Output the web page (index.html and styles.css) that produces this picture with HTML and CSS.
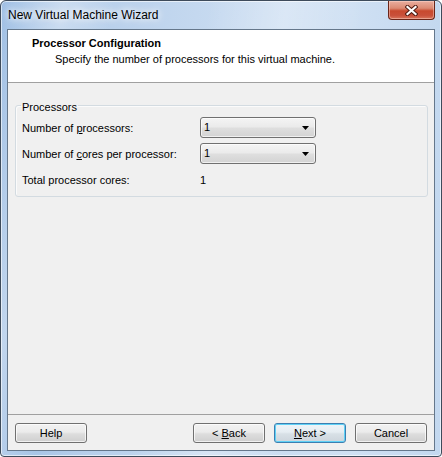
FILE: index.html
```html
<!DOCTYPE html>
<html>
<head>
<meta charset="utf-8">
<link rel="stylesheet" href="styles.css">
</head>
<body>
<div class="window">
  <div class="titlebar">
    <span class="title">New Virtual Machine Wizard</span>
    <div class="close">
      <svg width="13" height="11" viewBox="0 0 13 11"><path d="M2.5 2 L10.5 9 M10.5 2 L2.5 9" stroke="#4f1a10" stroke-width="4.2" stroke-linecap="square"/><path d="M2.5 2 L10.5 9 M10.5 2 L2.5 9" stroke="#fff" stroke-width="2.2" stroke-linecap="square"/></svg>
    </div>
  </div>
  <div class="client">
    <div class="header">
      <div class="h-title">Processor Configuration</div>
      <div class="h-sub">Specify the number of processors for this virtual machine.</div>
    </div>
    <div class="body">
      <fieldset class="group">
        <legend>Processors</legend>
        <div class="grid">
          <span>Number of <u>p</u>rocessors:</span>
          <div class="combo"><span>1</span><svg class="arrow" width="7" height="4" viewBox="0 0 7 4"><path d="M0 0H7L3.5 4Z" fill="#000"/></svg></div>
          <span>Number of <u>c</u>ores per processor:</span>
          <div class="combo"><span>1</span><svg class="arrow" width="7" height="4" viewBox="0 0 7 4"><path d="M0 0H7L3.5 4Z" fill="#000"/></svg></div>
          <span>Total processor cores:</span>
          <span class="val">1</span>
        </div>
      </fieldset>
    </div>
    <div class="footer">
      <div class="btn help">Help</div>
      <div class="btn">&lt; <u>B</u>ack</div>
      <div class="btn default"><u>N</u>ext &gt;</div>
      <div class="btn">Cancel</div>
    </div>
  </div>
</div>
</body>
</html>
```
FILE: styles.css
```css
* { box-sizing: border-box; }
html, body { margin: 0; padding: 0; }
body {
  font-family: "Liberation Sans", Arial, sans-serif;
  font-size: 11px;
  color: #000;
  background: #fff;
}
.window {
  width: 442px;
  height: 457px;
  border: 1px solid #3e4b5b;
  border-radius: 6px 6px 4px 4px;
  padding: 0 6px 5px;
  display: flex;
  flex-direction: column;
  background:
    linear-gradient(100deg, rgba(255,255,255,0) 0%, rgba(255,255,255,0.35) 12%, rgba(255,255,255,0) 22%, rgba(255,255,255,0) 40%, rgba(255,255,255,0.3) 55%, rgba(255,255,255,0) 70%),
    linear-gradient(90deg, #9fbfe4 0%, #b7cfeb 20%, #c7daf0 50%, #cfe0f3 80%, #c3d8ef 100%);
  box-shadow: inset 0 0 0 1px rgba(255,255,255,0.6);
}
.titlebar {
  height: 28px;
  flex: none;
  display: flex;
  align-items: flex-start;
}
.title {
  margin-top: 6px;
  padding-left: 1px;
  font-size: 12px;
  line-height: 16px;
  text-shadow: 0 0 6px #fff, 0 0 10px rgba(255,255,255,0.9);
}
.close {
  margin-left: auto;
  width: 47px;
  height: 19px;
  border: 1px solid #6a2518;
  border-top: none;
  border-radius: 0 0 4px 4px;
  background: linear-gradient(#eaae9f 0%, #dc8a73 40%, #c8492e 55%, #c9503a 80%, #d9765c 100%);
  box-shadow: inset 0 0 0 1px rgba(255,220,210,0.45);
  display: flex;
  align-items: center;
  justify-content: center;
}
.client {
  flex: 1;
  border: 1px solid #65778b;
  background: #f0f0f0;
  display: flex;
  flex-direction: column;
}
.header {
  flex: none;
  height: 53px;
  background: #fff;
  border-bottom: 1px solid #a0a0a0;
  padding: 7px 0 0 24px;
}
.h-title {
  font-weight: bold;
  line-height: 13px;
}
.h-sub {
  margin: 3px 0 0 23px;
  line-height: 13px;
}
.body {
  flex: 1;
  padding: 13px 6px 0 7px;
}
.group {
  margin: 0;
  min-width: 0;
  border: 1px solid #d3dbe1;
  border-radius: 3px;
  padding: 3px 6px 6px 6px;
  box-shadow: inset 1px 1px 0 #fbfbfb;
}
.group legend {
  margin-left: -1px;
  padding: 4px 1px 0;
  line-height: 14px;
}
.grid {
  display: grid;
  grid-template-columns: 178px 116px;
  grid-auto-rows: 21px;
  row-gap: 5px;
  align-items: center;
}
.val { padding-left: 0; }
.combo {
  height: 21px;
  border: 1px solid #707070;
  border-radius: 3px;
  background: linear-gradient(#f4f4f4 0%, #ebebeb 45%, #dedede 55%, #d3d3d3 100%);
  box-shadow: inset 0 0 0 1px rgba(255,255,255,0.65);
  display: flex;
  align-items: center;
  padding: 0 6px 0 3px;
  line-height: 13px;
}
.combo .arrow { margin-left: auto; }
.footer {
  flex: none;
  height: 36px;
  border-top: 1px solid #a0a0a0;
  padding: 8px 7px 0 7px;
  display: flex;
  align-items: flex-start;
  gap: 9px;
}
.btn {
  width: 72px;
  height: 20px;
  border: 1px solid #707070;
  border-radius: 3px;
  background: linear-gradient(#f2f2f2 0%, #ebebeb 45%, #dddddd 55%, #cfcfcf 100%);
  box-shadow: inset 0 0 0 1px rgba(255,255,255,0.7);
  text-align: center;
  line-height: 18px;
}
.help { margin-right: auto; }
.default {
  border-color: #3c7fb1;
  box-shadow: inset 0 0 0 1px #5fd1f6;
  background: linear-gradient(#eef4f8 0%, #e6edf2 45%, #d8e0e6 55%, #ccd5dc 100%);
}
```
